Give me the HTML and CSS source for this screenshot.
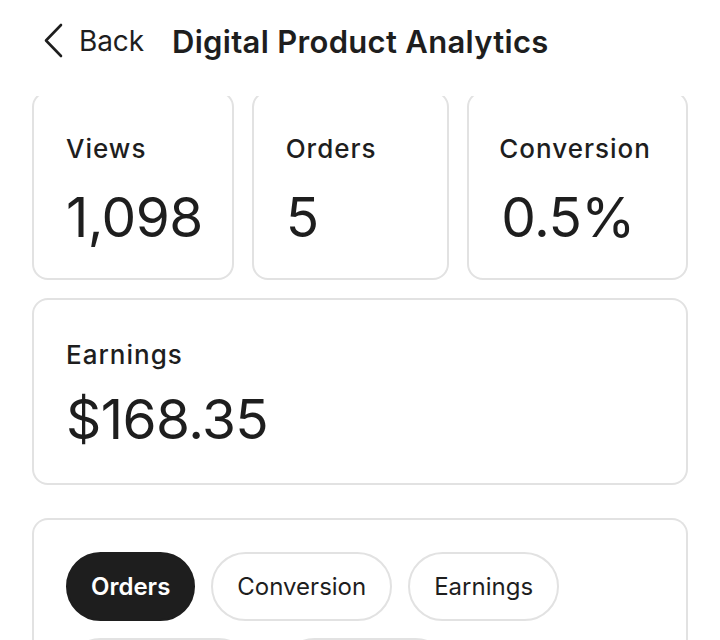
FILE: index.html
```html
<!DOCTYPE html>
<html lang="en">
<head>
<meta charset="utf-8">
<title>Digital Product Analytics</title>
<link rel="stylesheet" href="styles.css">
</head>
<body>
<div class="screen">
  <header class="topbar">
    <button class="back" type="button">
      <svg class="chev" width="24" height="36" viewBox="0 0 24 36" aria-hidden="true">
        <path d="M19 2 L4 17.5 L19 33" fill="none" stroke="#1e1e1e" stroke-width="2.6" stroke-linecap="round" stroke-linejoin="round"/>
      </svg>
      <span>Back</span>
    </button>
    <h1 class="title">Digital Product Analytics</h1>
  </header>
  <main class="content">
    <section class="stats">
      <div class="card stat">
        <div class="label">Views</div>
        <div class="value">1,098</div>
      </div>
      <div class="card stat">
        <div class="label">Orders</div>
        <div class="value">5</div>
      </div>
      <div class="card stat">
        <div class="label">Conversion</div>
        <div class="value">0.5%</div>
      </div>
    </section>
    <section class="card earnings">
      <div class="label">Earnings</div>
      <div class="value">$168.35</div>
    </section>
    <section class="card chart">
      <div class="chips">
        <button class="chip active" type="button">Orders</button>
        <button class="chip" type="button">Conversion</button>
        <button class="chip" type="button">Earnings</button>
        <button class="chip chip-a" type="button" aria-label="Views"></button>
        <button class="chip chip-b" type="button" aria-label="Visitors"></button>
      </div>
    </section>
  </main>
</div>
</body>
</html>
```
FILE: styles.css
```css
* { box-sizing: border-box; }
html, body { margin: 0; padding: 0; background: #fff; }
body {
  font-family: "Inter", "Noto Sans", "Liberation Sans", sans-serif;
  color: #1e1e1e;
}
.screen {
  width: 720px;
  height: 640px;
  overflow: hidden;
  position: relative;
}
.topbar {
  position: relative;
  z-index: 2;
  height: 96px;
  background: #fff;
  display: flex;
  align-items: center;
  padding: 0 0 14px 42px;
}
.back {
  display: flex;
  align-items: center;
  gap: 13px;
  border: 0;
  background: none;
  padding: 0;
  font-family: inherit;
  font-size: 28px;
  font-weight: 400;
  color: #1e1e1e;
  letter-spacing: -0.1px;
}
.chev { display: block; }
.title {
  margin: 0 0 0 28px;
  font-size: 31px;
  font-weight: 600;
  letter-spacing: 0.3px;
}
.content {
  position: relative;
  z-index: 1;
  margin-top: -5px;
  padding: 0 32px;
}
.card {
  border: 2px solid #e2e2e2;
  border-radius: 16px;
  background: #fff;
}
.stats {
  display: grid;
  grid-template-columns: 201fr 197fr 220fr;
  gap: 18px;
}
.stat {
  height: 189px;
  padding: 40px 0 0 32px;
}
.label {
  font-size: 26px;
  font-weight: 500;
  line-height: 32px;
  letter-spacing: 1px;
}
.stat:last-child .label { margin-left: -2px; }
.value {
  font-size: 55px;
  font-weight: 400;
  line-height: 64px;
  margin-top: 20px;
  letter-spacing: -0.6px;
}
.earnings {
  margin-top: 18px;
  height: 187px;
  padding: 39px 0 0 32px;
}
.earnings .value { margin-top: 16px; }
.chart {
  margin-top: 33px;
  height: 200px;
  padding: 32px 0 0 32px;
  border-bottom: 0;
}
.chips {
  display: flex;
  flex-wrap: wrap;
  gap: 17px 16px;
  width: 560px;
}
.chip {
  height: 69px;
  border-radius: 35px;
  border: 2px solid #e2e2e2;
  background: #fff;
  padding: 0 24px;
  font-family: inherit;
  font-size: 24px;
  font-weight: 400;
  color: #1e1e1e;
  letter-spacing: 0px;
}
.chip.active {
  background: #1e1e1e;
  border-color: #1e1e1e;
  color: #fff;
  font-weight: 600;
  padding: 0 23px;
}
.chip-a { width: 187px; margin-right: 11px; }
.chip-b { width: 170px; }
```
